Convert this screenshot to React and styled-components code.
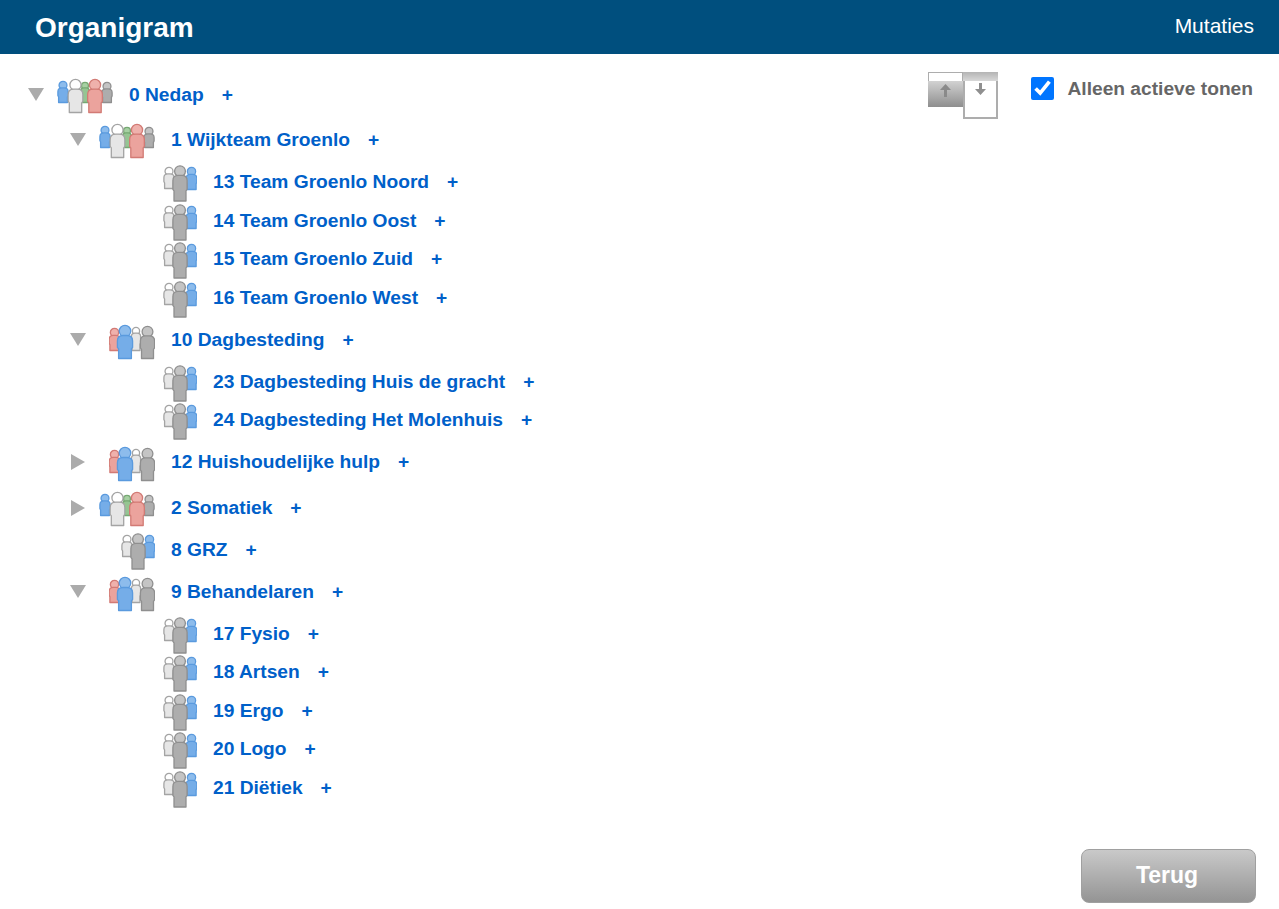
import React from 'react';
import styled, { createGlobalStyle } from 'styled-components';

const Global = createGlobalStyle`
  html, body { margin: 0; padding: 0; background: #fff; }
  body { font-family: "Liberation Sans", Arial, sans-serif; }
`;

const Page = styled.div`
  height: 909px;
  display: flex;
  flex-direction: column;
  overflow: hidden;
`;
const Header = styled.header`
  flex: none;
  height: 54px;
  background: #004f7e;
  color: #fff;
  display: flex;
  align-items: center;
  justify-content: space-between;
  padding: 0 25px 0 35px;
`;
const Title = styled.h1`
  margin: 2px 0 0;
  font-size: 28px;
  font-weight: 700;
`;
const HeaderLink = styled.a`
  font-size: 21px;
  margin-top: -3px;
`;
const Main = styled.main`
  flex: 1;
  display: flex;
  justify-content: space-between;
  align-items: flex-start;
  padding: 17.75px 26px 0 28px;
`;
const Tree = styled.ul`
  list-style: none;
  margin: 0;
  padding: 0;
`;
const Row = styled.li`
  height: ${p => (p.$small ? 38.5 : 45.5)}px;
  padding-left: ${p => p.$level * 42}px;
  display: flex;
  align-items: center;
`;
const Toggle = styled.span`
  flex: none;
  width: 16px;
  height: 16px;
  display: flex;
`;
const IconSlot = styled.span`
  flex: none;
  width: 69px;
  height: 37px;
  margin: 3px 16px 0 0;
  display: flex;
  justify-content: flex-end;
`;
const Label = styled.a`
  font-size: 19.2px;
  font-weight: 700;
  color: #0060c9;
  white-space: nowrap;
`;
const Plus = styled.a`
  font-size: 19.2px;
  font-weight: 700;
  color: #0060c9;
  margin-left: 18px;
`;
const Tools = styled.div`
  display: flex;
  align-items: flex-start;
  margin-top: 0.25px;
`;
const IconPair = styled.div`
  display: flex;
  margin-right: 33px;
`;
const Check = styled.label`
  display: flex;
  align-items: center;
  height: 34px;
  font-size: 19.2px;
  font-weight: 700;
  color: #666;
`;
const CheckBox = styled.input`
  width: 23px;
  height: 23px;
  margin: -2px 13px 0 0;
  accent-color: #0075ff;
`;
const Footer = styled.footer`
  flex: none;
  display: flex;
  justify-content: flex-end;
  padding: 0 23px 6px 0;
`;
const BackButton = styled.button`
  width: 175px;
  height: 54px;
  border: 1px solid #a0a0a0;
  border-radius: 8px;
  background: linear-gradient(#c9c9c9, #949494);
  color: #fff;
  font: 700 23px "Liberation Sans", Arial, sans-serif;
  padding: 0 3px 2px 0;
`;

const Defs = () => (
  <svg width="0" height="0" style={{ position: 'absolute' }}>
    <defs>
      <filter id="soft" x="-10%" y="-10%" width="120%" height="120%">
        <feGaussianBlur stdDeviation="0.6" />
      </filter>
    </defs>
  </svg>
);

const COLORS = {
  blue: ['#8dbcec', '#74ade8', '#5a9ade'],
  white: ['#f4f4f4', '#e6e6e6', '#a4a4a4'],
  green: ['#a6d0a2', '#95c592', '#76a873'],
  red: ['#efb1ac', '#eba39d', '#d27a74'],
  gray: ['#c4c4c4', '#adadad', '#8f8f8f'],
};

// A person: big head on a tapering body, inside x-centre cx, width w, from top to bottom.
const Person = ({ c, cx, w, top, bottom }) => {
  const [light, fill, edge] = COLORS[c];
  const h = bottom - top;
  const headR = w * 0.36;
  const headY = top + headR + 0.3;
  const sTop = top + headR * 2 - 1;
  const l = cx - w / 2 + 0.4;
  const r = cx + w / 2 - 0.4;
  const legL = cx - w * 0.4;
  const legR = cx + w * 0.4;
  const waist = top + h * 0.66;
  const d = `M${l} ${sTop + w * 0.35} Q${l} ${sTop} ${l + w * 0.35} ${sTop} L${r - w * 0.35} ${sTop} Q${r} ${sTop} ${r} ${sTop + w * 0.35} L${r} ${waist} L${legR} ${waist + 1.5} L${legR} ${bottom - 0.5} L${legL} ${bottom - 0.5} L${legL} ${waist + 1.5} L${l} ${waist} Z`;
  return (
    <g stroke={edge} strokeWidth="1.3">
      <circle cx={cx} cy={headY} r={headR} fill={c === 'white' ? '#fff' : light} />
      <path d={d} fill={fill} strokeLinejoin="round" />
    </g>
  );
};

const GROUPS = {
  five: {
    width: 56,
    people: [
      ['blue', 6, 11, 3, 25],
      ['gray', 50, 11, 4, 25],
      ['green', 28, 9.5, 4, 25],
      ['white', 18.5, 15.5, 1, 35],
      ['red', 38, 15.5, 1, 35],
    ],
  },
  four: {
    width: 46,
    people: [
      ['red', 5.5, 11.5, 5, 28],
      ['white', 27, 10, 4, 28],
      ['blue', 16, 16, 2, 36],
      ['gray', 38.5, 15, 3, 36],
    ],
  },
  three: {
    width: 34,
    people: [
      ['white', 6, 11, 2, 24],
      ['blue', 28.5, 11.5, 2, 25],
      ['gray', 17, 15, 0.5, 36.5],
    ],
  },
};

const GroupIcon = ({ kind }) => {
  const g = GROUPS[kind];
  return (
    <svg width={g.width} height="37" viewBox={`0 0 ${g.width} 37`}>
      <g filter="url(#soft)">
        {g.people.map(([c, cx, w, top, bottom], i) => (
          <Person key={i} c={c} cx={cx} w={w} top={top} bottom={bottom} />
        ))}
      </g>
    </svg>
  );
};

const Arrow = ({ open }) => (
  <svg width="16" height="16" viewBox="0 0 16 16">
    <polygon
      points={open ? '0,1 16,1 8,14' : '1,0 15,8 1,16'}
      fill="#ababab"
      filter="url(#soft)"
    />
  </svg>
);

const ExpandIcon = () => (
  <svg width="35" height="36" viewBox="0 0 35 36">
    <defs>
      <linearGradient id="panelUp" x1="0" y1="0" x2="0" y2="1">
        <stop offset="0" stopColor="#d2d2d2" />
        <stop offset="1" stopColor="#8e8e8e" />
      </linearGradient>
    </defs>
    <rect x="0.5" y="0.5" width="34" height="34" fill="#fff" stroke="#adadad" />
    <rect x="0" y="9" width="35" height="26" fill="url(#panelUp)" />
    <path d="M17.5 12 L23 18 H19 V25 H16 V18 H12 Z" fill="#8a8a8a" />
  </svg>
);

const CollapseIcon = () => (
  <svg width="35" height="47" viewBox="0 0 35 47">
    <defs>
      <linearGradient id="panelDown" x1="0" y1="0" x2="0" y2="1">
        <stop offset="0" stopColor="#b4b4b4" />
        <stop offset="1" stopColor="#d8d8d8" />
      </linearGradient>
    </defs>
    <rect x="1" y="1" width="33" height="45" fill="#fff" stroke="#adadad" strokeWidth="2" />
    <rect x="0" y="0" width="35" height="9" fill="url(#panelDown)" />
    <path d="M16 11 H19 V17 H23 L17.5 23 L12 17 H16 Z" fill="#8f8f8f" />
  </svg>
);

const NODES = [
  { level: 0, toggle: 'open', icon: 'five', name: '0 Nedap' },
  { level: 1, toggle: 'open', icon: 'five', name: '1 Wijkteam Groenlo' },
  { level: 2, icon: 'three', name: '13 Team Groenlo Noord' },
  { level: 2, icon: 'three', name: '14 Team Groenlo Oost' },
  { level: 2, icon: 'three', name: '15 Team Groenlo Zuid' },
  { level: 2, icon: 'three', name: '16 Team Groenlo West' },
  { level: 1, toggle: 'open', icon: 'four', name: '10 Dagbesteding' },
  { level: 2, icon: 'three', name: '23 Dagbesteding Huis de gracht' },
  { level: 2, icon: 'three', name: '24 Dagbesteding Het Molenhuis' },
  { level: 1, toggle: 'closed', icon: 'four', name: '12 Huishoudelijke hulp' },
  { level: 1, toggle: 'closed', icon: 'five', name: '2 Somatiek' },
  { level: 1, icon: 'three', name: '8 GRZ' },
  { level: 1, toggle: 'open', icon: 'four', name: '9 Behandelaren' },
  { level: 2, icon: 'three', name: '17 Fysio' },
  { level: 2, icon: 'three', name: '18 Artsen' },
  { level: 2, icon: 'three', name: '19 Ergo' },
  { level: 2, icon: 'three', name: '20 Logo' },
  { level: 2, icon: 'three', name: '21 Diëtiek' },
];

export default function App() {
  return (
    <Page>
      <Global />
      <Defs />
      <Header>
        <Title>Organigram</Title>
        <HeaderLink>Mutaties</HeaderLink>
      </Header>
      <Main>
        <Tree>
          {NODES.map(n => (
            <Row key={n.name} $level={n.level} $small={n.icon === 'three'}>
              <Toggle>{n.toggle && <Arrow open={n.toggle === 'open'} />}</Toggle>
              <IconSlot><GroupIcon kind={n.icon} /></IconSlot>
              <Label>{n.name}</Label>
              <Plus>+</Plus>
            </Row>
          ))}
        </Tree>
        <Tools>
          <IconPair>
            <ExpandIcon />
            <CollapseIcon />
          </IconPair>
          <Check>
            <CheckBox type="checkbox" defaultChecked />
            Alleen actieve tonen
          </Check>
        </Tools>
      </Main>
      <Footer>
        <BackButton>Terug</BackButton>
      </Footer>
    </Page>
  );
}
